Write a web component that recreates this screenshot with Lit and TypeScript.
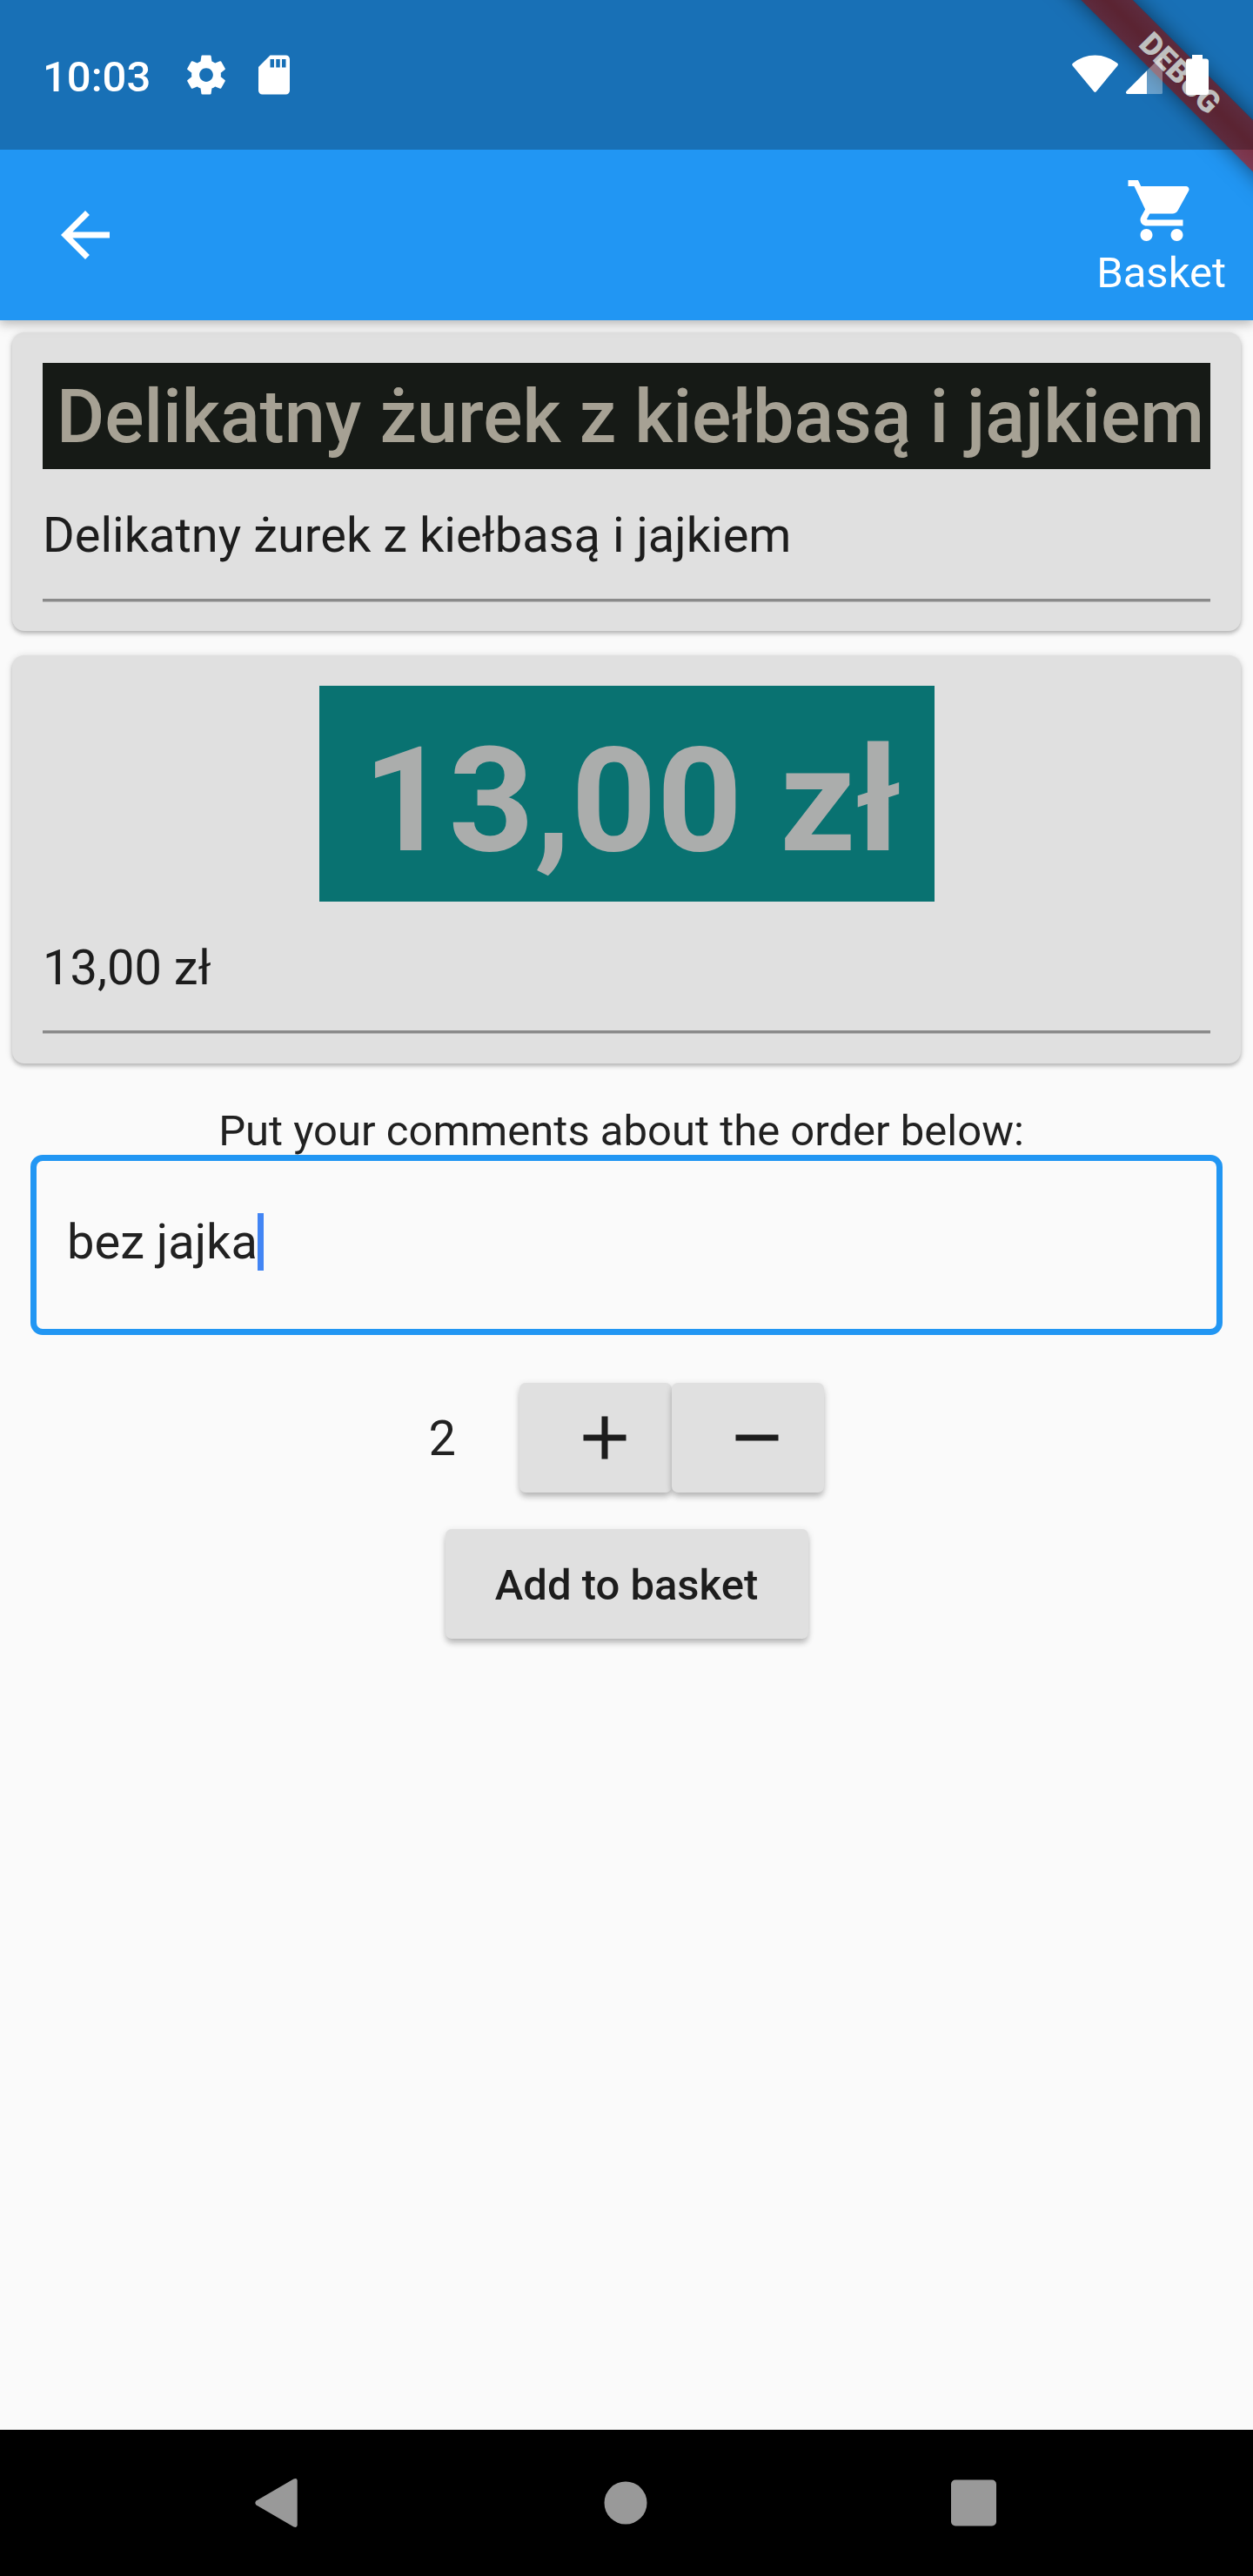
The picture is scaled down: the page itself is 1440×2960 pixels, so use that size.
import { LitElement, html, css, svg } from "lit";
import { customElement, property, state } from "lit/decorators.js";

const ICONS = {
  settings:
    "M19.43 12.98c.04-.32.07-.64.07-.98s-.03-.66-.07-.98l2.11-1.65c.19-.15.24-.42.12-.64l-2-3.46c-.12-.22-.39-.3-.61-.22l-2.49 1c-.52-.4-1.08-.73-1.69-.98l-.38-2.65C14.46 2.18 14.25 2 14 2h-4c-.25 0-.46.18-.49.42l-.38 2.65c-.61.25-1.17.59-1.69.98l-2.49-1c-.23-.09-.49 0-.61.22l-2 3.46c-.13.22-.07.49.12.64l2.11 1.65c-.04.32-.07.65-.07.98s.03.66.07.98l-2.11 1.65c-.19.15-.24.42-.12.64l2 3.46c.12.22.39.3.61.22l2.49-1c.52.4 1.08.73 1.69.98l.38 2.65c.03.24.24.42.49.42h4c.25 0 .46-.18.49-.42l.38-2.65c.61-.25 1.17-.59 1.69-.98l2.49 1c.23.09.49 0 .61-.22l2-3.46c.12-.22.07-.49-.12-.64l-2.11-1.65zM12 15.5c-1.93 0-3.5-1.57-3.5-3.5s1.57-3.5 3.5-3.5 3.5 1.57 3.5 3.5-1.57 3.5-3.5 3.5z",
  sdCard:
    "M18 2h-8L4.02 8 4 20c0 1.1.9 2 2 2h12c1.1 0 2-.9 2-2V4c0-1.1-.9-2-2-2zm-6 6.2h-2V4h2v4.2zm3 0h-2V4h2v4.2zm3 0h-2V4h2v4.2z",
  back: "M20 11H7.83l5.59-5.59L12 4l-8 8 8 8 1.41-1.41L7.83 13H20v-2z",
  cart: "M7 18c-1.1 0-1.99.9-1.99 2S5.9 22 7 22s2-.9 2-2-.9-2-2-2zM1 2v2h2l3.6 7.59-1.35 2.45c-.16.28-.25.61-.25.96 0 1.1.9 2 2 2h12v-2H7.42c-.14 0-.25-.11-.25-.25l.03-.12.9-1.63h7.45c.75 0 1.41-.41 1.75-1.03l3.58-6.49c.08-.14.12-.31.12-.48 0-.55-.45-1-1-1H5.21l-.94-2H1zm16 16c-1.1 0-1.99.9-1.99 2s.89 2 1.99 2 2-.9 2-2-.9-2-2-2z",
  add: "M19 13h-6v6h-2v-6H5v-2h6V5h2v6h6v2z",
  remove: "M19 13H5v-2h14v2z",
};

@customElement("md-icon")
export class MdIcon extends LitElement {
  static styles = css`
    :host {
      display: block;
      width: 84px;
      height: 84px;
      flex: none;
    }
    .glyph {
      display: block;
      width: 100%;
      height: 100%;
      fill: currentColor;
    }
  `;
  @property() name: keyof typeof ICONS = "add";
  render() {
    return html`<svg class="glyph" viewBox="0 0 24 24">${svg`<path d=${ICONS[this.name]}></path>`}</svg>`;
  }
}

@customElement("app-root")
export class AppRoot extends LitElement {
  static styles = css`
    :host {
      display: block;
      font-family: Roboto, "Liberation Sans", sans-serif;
      font-size: 56px;
      line-height: 66px;
      color: rgba(0, 0, 0, 0.87);
    }
    .screen {
      display: flex;
      flex-direction: column;
      width: 1440px;
      height: 2960px;
      overflow: hidden;
      background: #fafafa;
    }
    .header {
      position: relative;
      z-index: 1;
      flex: none;
      height: 368px;
      background: #2196f3;
      color: #fff;
      font-size: 49px;
      line-height: 57px;
      box-shadow: 0 5px 9px rgba(0, 0, 0, 0.16), 0 3px 18px rgba(0, 0, 0, 0.12);
    }
    .banner-clip {
      position: absolute;
      inset: 0;
      overflow: hidden;
    }
    .banner {
      position: absolute;
      left: 1156px;
      top: 62.8px;
      width: 400px;
      height: 42.4px;
      transform: rotate(45deg);
      background:
        linear-gradient(rgba(183, 28, 28, 0.627), rgba(183, 28, 28, 0.627)),
        linear-gradient(rgba(0, 0, 0, 0.27), rgba(0, 0, 0, 0.46) 50%, rgba(0, 0, 0, 0.27));
      box-shadow: 0 0 25px rgba(0, 0, 0, 0.5);
      text-align: center;
      font-size: 35.7px;
      line-height: 42px;
      font-weight: 900;
    }
    .status {
      position: relative;
      display: flex;
      align-items: center;
      box-sizing: border-box;
      height: 172px;
      padding: 0 51px 0 49px;
      background: rgba(0, 0, 0, 0.25);
    }
    .time {
      font-weight: 500;
      width: 161px;
      padding-top: 5px;
    }
    .status-icon {
      width: 54px;
      height: 54px;
      margin-right: 23.5px;
    }
    .signals {
      display: flex;
      margin-left: auto;
    }
    .appbar {
      position: relative;
      display: flex;
      justify-content: space-between;
      height: 196px;
      padding: 0 31px 0 56px;
    }
    .back {
      margin-top: 56px;
    }
    .basket {
      display: flex;
      flex-direction: column;
      align-items: center;
      gap: 1px;
      padding-top: 28px;
    }
    .main {
      display: flex;
      flex-direction: column;
      flex: 1;
      padding-top: 14px;
    }
    .card {
      display: flex;
      flex-direction: column;
      box-sizing: border-box;
      flex: none;
      margin: 0 14px 28px;
      padding: 35px;
      border-radius: 14px;
      background: #e0e0e0;
      box-shadow: 0 3px 4px rgba(0, 0, 0, 0.2), 0 1px 9px rgba(0, 0, 0, 0.14);
    }
    .card.name {
      height: 342.5px;
    }
    .card.price {
      height: 469px;
    }
    .picture {
      display: block;
      flex: none;
      align-self: center;
    }
    .picture text {
      font-family: Roboto, "Liberation Sans", sans-serif;
    }
    .field {
      margin-top: 43px;
      padding-bottom: 39.5px;
      border-bottom: 3px solid #8a8a8a;
      box-shadow: 0 1px 0 #b8b8b8;
    }
    .label {
      height: 55.5px;
      margin-top: 21.5px;
      padding-right: 12px;
      text-align: center;
      font-size: 49px;
      line-height: 57px;
      white-space: nowrap;
    }
    .comment {
      display: flex;
      align-items: center;
      box-sizing: border-box;
      height: 207px;
      margin: 0 35px;
      padding: 0 35px;
      border: 7px solid #2196f3;
      border-radius: 14px;
    }
    .comment-text {
      padding-bottom: 6px;
    }
    .caret {
      width: 7px;
      height: 66px;
      margin-bottom: 6px;
      background: #4285f4;
    }
    .quantity {
      display: flex;
      align-items: center;
      justify-content: center;
      margin-top: 55.5px;
    }
    .count {
      padding-top: 2px;
      margin-right: 73.5px;
    }
    .button {
      display: flex;
      align-items: center;
      box-sizing: border-box;
      height: 126px;
      padding: 0 56px;
      border: 0;
      border-radius: 7px;
      background: #e0e0e0;
      color: inherit;
      font: inherit;
      box-shadow: 0 6px 7px -1px rgba(0, 0, 0, 0.2), 0 2px 9px rgba(0, 0, 0, 0.13);
    }
    .button.step {
      width: 175px;
    }
    .button.submit {
      align-self: center;
      justify-content: center;
      width: 417px;
      margin-top: 42px;
      padding: 3px 0 0;
      font-size: 49px;
      line-height: 57px;
      font-weight: 500;
      white-space: nowrap;
    }
    .nav {
      display: flex;
      align-items: center;
      justify-content: space-between;
      box-sizing: border-box;
      flex: none;
      height: 168px;
      padding: 0 294px 0 291px;
      background: #000;
      fill: #999;
    }
  `;

  @state() private count = 2;
  private name = "Delikatny żurek z kiełbasą i jajkiem";
  private price = "13,00 zł";

  render() {
    return html`
      <div class="screen">
        <header class="header">
          <div class="banner-clip"><div class="banner">DEBUG</div></div>
          <div class="status">
            <span class="time">10:03</span>
            <md-icon class="status-icon" name="settings"></md-icon>
            <md-icon class="status-icon" name="sdCard"></md-icon>
            <svg class="signals" width="158" height="48" viewBox="1231 62 158 48" fill="#fff">
              <path d="M1259.8 105.2q-1.3 1.5-2.6 0L1232.6 75.4q-1.2-1.7.6-2.8Q1244.500 63.600 1258.500 63.600T1284 72.600q1.600 1.200.4 2.800z" />
              <path opacity=".35" d="M1318 108V81.300L1332.600 66.700Q1336 64.500 1336 68.400V106.500q0 1.500-1.500 1.500z" />
              <path d="M1318 108h-22.500q-2.600-.9-.9-3.200L1318 81.300z" />
              <path d="M1370 63h12v4.500h4q3 0 3 3V106q0 3-3 3h-20q-3 0-3-3V70.500q0-3 3-3h4z" />
            </svg>
          </div>
          <div class="appbar">
            <md-icon class="back" name="back"></md-icon>
            <div class="basket">
              <md-icon name="cart"></md-icon>
              <span>Basket</span>
            </div>
          </div>
        </header>
        <main class="main">
          <section class="card name">
            <svg class="picture" width="1342" height="122">
              <rect width="1342" height="122" fill="#161a16" />
              <text x="16" y="91" font-size="84.400" font-weight="500" fill="#a6a194" textLength="1319" lengthAdjust="spacingAndGlyphs">${this.name}</text>
            </svg>
            <div class="field">${this.name}</div>
          </section>
          <section class="card price">
            <svg class="picture" width="707" height="248">
              <rect width="707" height="248" fill="#097271" />
              <text x="50" y="189" font-size="167" font-weight="700" fill="#abadac" textLength="619" lengthAdjust="spacingAndGlyphs">${this.price}</text>
            </svg>
            <div class="field">${this.price}</div>
          </section>
          <div class="label">Put your comments about the order below:</div>
          <div class="comment"><span class="comment-text">bez jajka</span><i class="caret"></i></div>
          <div class="quantity">
            <span class="count">${this.count}</span>
            <button class="button step" @click=${() => this.count++}><md-icon name="add"></md-icon></button>
            <button class="button step" @click=${() => this.count--}><md-icon name="remove"></md-icon></button>
          </div>
          <button class="button submit">Add to basket</button>
        </main>
        <nav class="nav">
          <svg width="54" height="58" viewBox="0 0 54 58">
            <path d="M3.600 31.500q-2.600-2.500 0-5L46.500 1.500q4-1.600 4.200 2V54.500q-.2 3.600-4.200 2z" />
          </svg>
          <svg width="50" height="50" viewBox="0 0 50 50"><circle cx="25" cy="25" r="24.500" /></svg>
          <svg width="54" height="54" viewBox="0 0 54 54"><rect x="1" y=".5" width="52" height="53" rx="5" /></svg>
        </nav>
      </div>
    `;
  }
}
